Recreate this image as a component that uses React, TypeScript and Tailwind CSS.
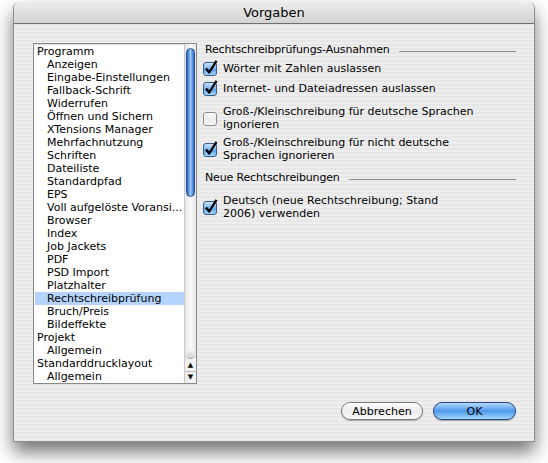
import React from "react";

interface ListItem {
    label: string;
    sub: boolean;
    selected?: boolean;
}

const items: ListItem[] = [
    {label: "Programm", sub: false},
    {label: "Anzeigen", sub: true},
    {label: "Eingabe-Einstellungen", sub: true},
    {label: "Fallback-Schrift", sub: true},
    {label: "Widerrufen", sub: true},
    {label: "Öffnen und Sichern", sub: true},
    {label: "XTensions Manager", sub: true},
    {label: "Mehrfachnutzung", sub: true},
    {label: "Schriften", sub: true},
    {label: "Dateiliste", sub: true},
    {label: "Standardpfad", sub: true},
    {label: "EPS", sub: true},
    {label: "Voll aufgelöste Voransi...", sub: true},
    {label: "Browser", sub: true},
    {label: "Index", sub: true},
    {label: "Job Jackets", sub: true},
    {label: "PDF", sub: true},
    {label: "PSD Import", sub: true},
    {label: "Platzhalter", sub: true},
    {label: "Rechtschreibprüfung", sub: true, selected: true},
    {label: "Bruch/Preis", sub: true},
    {label: "Bildeffekte", sub: true},
    {label: "Projekt", sub: false},
    {label: "Allgemein", sub: true},
    {label: "Standarddrucklayout", sub: false},
    {label: "Allgemein", sub: true},
];

function CheckBox({checked}: {checked: boolean}) {
    return (
        <svg width="15" height="16" viewBox="0 0 15 16" className="shrink-0">
            <defs>
                <linearGradient id="cbBlue" x1="0" y1="0" x2="0" y2="1">
                    <stop offset="0" stopColor="#cfe6fc" />
                    <stop offset="0.45" stopColor="#7cb8f0" />
                    <stop offset="0.55" stopColor="#5aa2ea" />
                    <stop offset="1" stopColor="#a8dcff" />
                </linearGradient>
                <linearGradient id="cbWhite" x1="0" y1="0" x2="0" y2="1">
                    <stop offset="0" stopColor="#ffffff" />
                    <stop offset="0.5" stopColor="#ececec" />
                    <stop offset="1" stopColor="#fafafa" />
                </linearGradient>
            </defs>
            <rect x="0.5" y="2.5" width="13" height="13" rx="2.5"
                  fill={checked ? "url(#cbBlue)" : "url(#cbWhite)"}
                  stroke={checked ? "#3d5a85" : "#8c8c8c"} />
            {checked && (
                <path d="M3 8.5 L6.2 12.5 L13.5 0.8" stroke="#000" strokeWidth="2.3"
                      fill="none" strokeLinejoin="round" />
            )}
        </svg>
    );
}

function CheckRow({checked, lines}: {checked: boolean; lines: string[]}) {
    return (
        <div className="flex items-center gap-[5px]">
            <CheckBox checked={checked} />
            <div className="leading-[13px]">
                {lines.map((l, i) => (
                    <div key={i}>{l}</div>
                ))}
            </div>
        </div>
    );
}

function GroupHeading({text}: {text: string}) {
    return (
        <div className="flex items-center gap-[9px] pl-[2px] h-[14px]">
            <span className="tracking-[-0.15px]">{text}</span>
            <div className="flex-1 border-t border-[#8d8d8d] mt-[3px]" />
        </div>
    );
}

function ScrollBar() {
    return (
        <div className="w-[12px] flex flex-col bg-linear-to-r from-[#e4e4e4] via-[#fafafa] to-[#e6e6e6] border-l border-[#c9c9c9]">
            <div className="h-[4px]" />
            <div className="h-[149px] mx-[1px] rounded-full bg-linear-to-r from-[#2a5fc8] via-[#9ccaf8] to-[#2f66cc] border border-[#2c4f8f]" />
            <div className="flex-1" />
            <div className="h-[10px] mx-[1px] rounded-b-full bg-linear-to-b from-[#f6f6f6] to-[#d4d4d4] border-b border-[#a8a8a8]" />
            <div className="h-[12px] flex items-center justify-center text-[7px] leading-none bg-linear-to-r from-[#ececec] to-[#f8f8f8]">▲</div>
            <div className="h-[12px] flex items-center justify-center text-[7px] leading-none border-t border-[#bcbcbc] bg-linear-to-r from-[#ececec] to-[#f8f8f8]">▼</div>
        </div>
    );
}

export default function App() {
    return (
        <div className="w-[548px] h-[463px] bg-white pt-[2px] pl-[13px] font-['DejaVu_Sans',sans-serif] text-black">
            <div className="w-[522px] h-[440px] rounded-t-[6px] flex flex-col overflow-hidden border-x border-b border-[#8f8f8f] shadow-[0_10px_18px_rgba(0,0,0,0.55)] bg-[repeating-linear-gradient(to_bottom,#eeeeee_0px,#eeeeee_2px,#e7e7e7_2px,#e7e7e7_4px)]">
                <div className="h-[22px] shrink-0 flex items-center justify-center text-[13px] bg-linear-to-b from-[#ededed] to-[#d3d3d3] border-b border-[#6f6f6f]">
                    Vorgaben
                </div>
                <div className="flex-1 flex flex-col pl-[19px] pr-[18px] pt-[19px]">
                    <div className="flex gap-[6px] items-start">
                        <div className="w-[164px] h-[341px] flex bg-white border border-[#8a8a8a] shadow-[inset_0_1px_1px_rgba(0,0,0,0.15)] text-[11px]">
                            <div className="flex-1 pt-[1px] pl-[1px]">
                                {items.map((it, i) => (
                                    <div key={i}
                                         className={`h-[13px] leading-[13px] whitespace-nowrap ${it.sub ? "pl-[12px]" : "pl-[2px]"} ${it.selected ? "bg-[#b5d4fd]" : ""}`}>
                                        {it.label}
                                    </div>
                                ))}
                            </div>
                            <ScrollBar />
                        </div>
                        <div className="flex-1 flex flex-col text-[11px]">
                            <GroupHeading text="Rechtschreibprüfungs-Ausnahmen" />
                            <div className="mt-[3px]">
                                <CheckRow checked={true} lines={["Wörter mit Zahlen auslassen"]} />
                            </div>
                            <div className="mt-[4px]">
                                <CheckRow checked={true} lines={["Internet- und Dateiadressen auslassen"]} />
                            </div>
                            <div className="mt-[9px]">
                                <CheckRow checked={false} lines={["Groß-/Kleinschreibung für deutsche Sprachen", "ignorieren"]} />
                            </div>
                            <div className="mt-[5px]">
                                <CheckRow checked={true} lines={["Groß-/Kleinschreibung für nicht deutsche", "Sprachen ignorieren"]} />
                            </div>
                            <div className="mt-[9px]">
                                <GroupHeading text="Neue Rechtschreibungen" />
                            </div>
                            <div className="mt-[9px]">
                                <CheckRow checked={true} lines={["Deutsch (neue Rechtschreibung; Stand", "2006) verwenden"]} />
                            </div>
                        </div>
                    </div>
                    <div className="flex justify-end gap-[10px] mt-[18px] text-[11px]">
                        <button className="w-[82px] h-[18px] rounded-full border border-[#7a7a7a] bg-linear-to-b from-[#ffffff] via-[#ececec] to-[#fafafa] shadow-[0_1px_1px_rgba(0,0,0,0.25)] leading-none">
                            Abbrechen
                        </button>
                        <button className="w-[83px] h-[18px] rounded-full border border-[#23468a] bg-linear-to-b from-[#b6d8fb] via-[#4f98ea] to-[#a0d8ff] shadow-[0_1px_1px_rgba(0,0,0,0.3)] leading-none">
                            OK
                        </button>
                    </div>
                </div>
            </div>
        </div>
    );
}
